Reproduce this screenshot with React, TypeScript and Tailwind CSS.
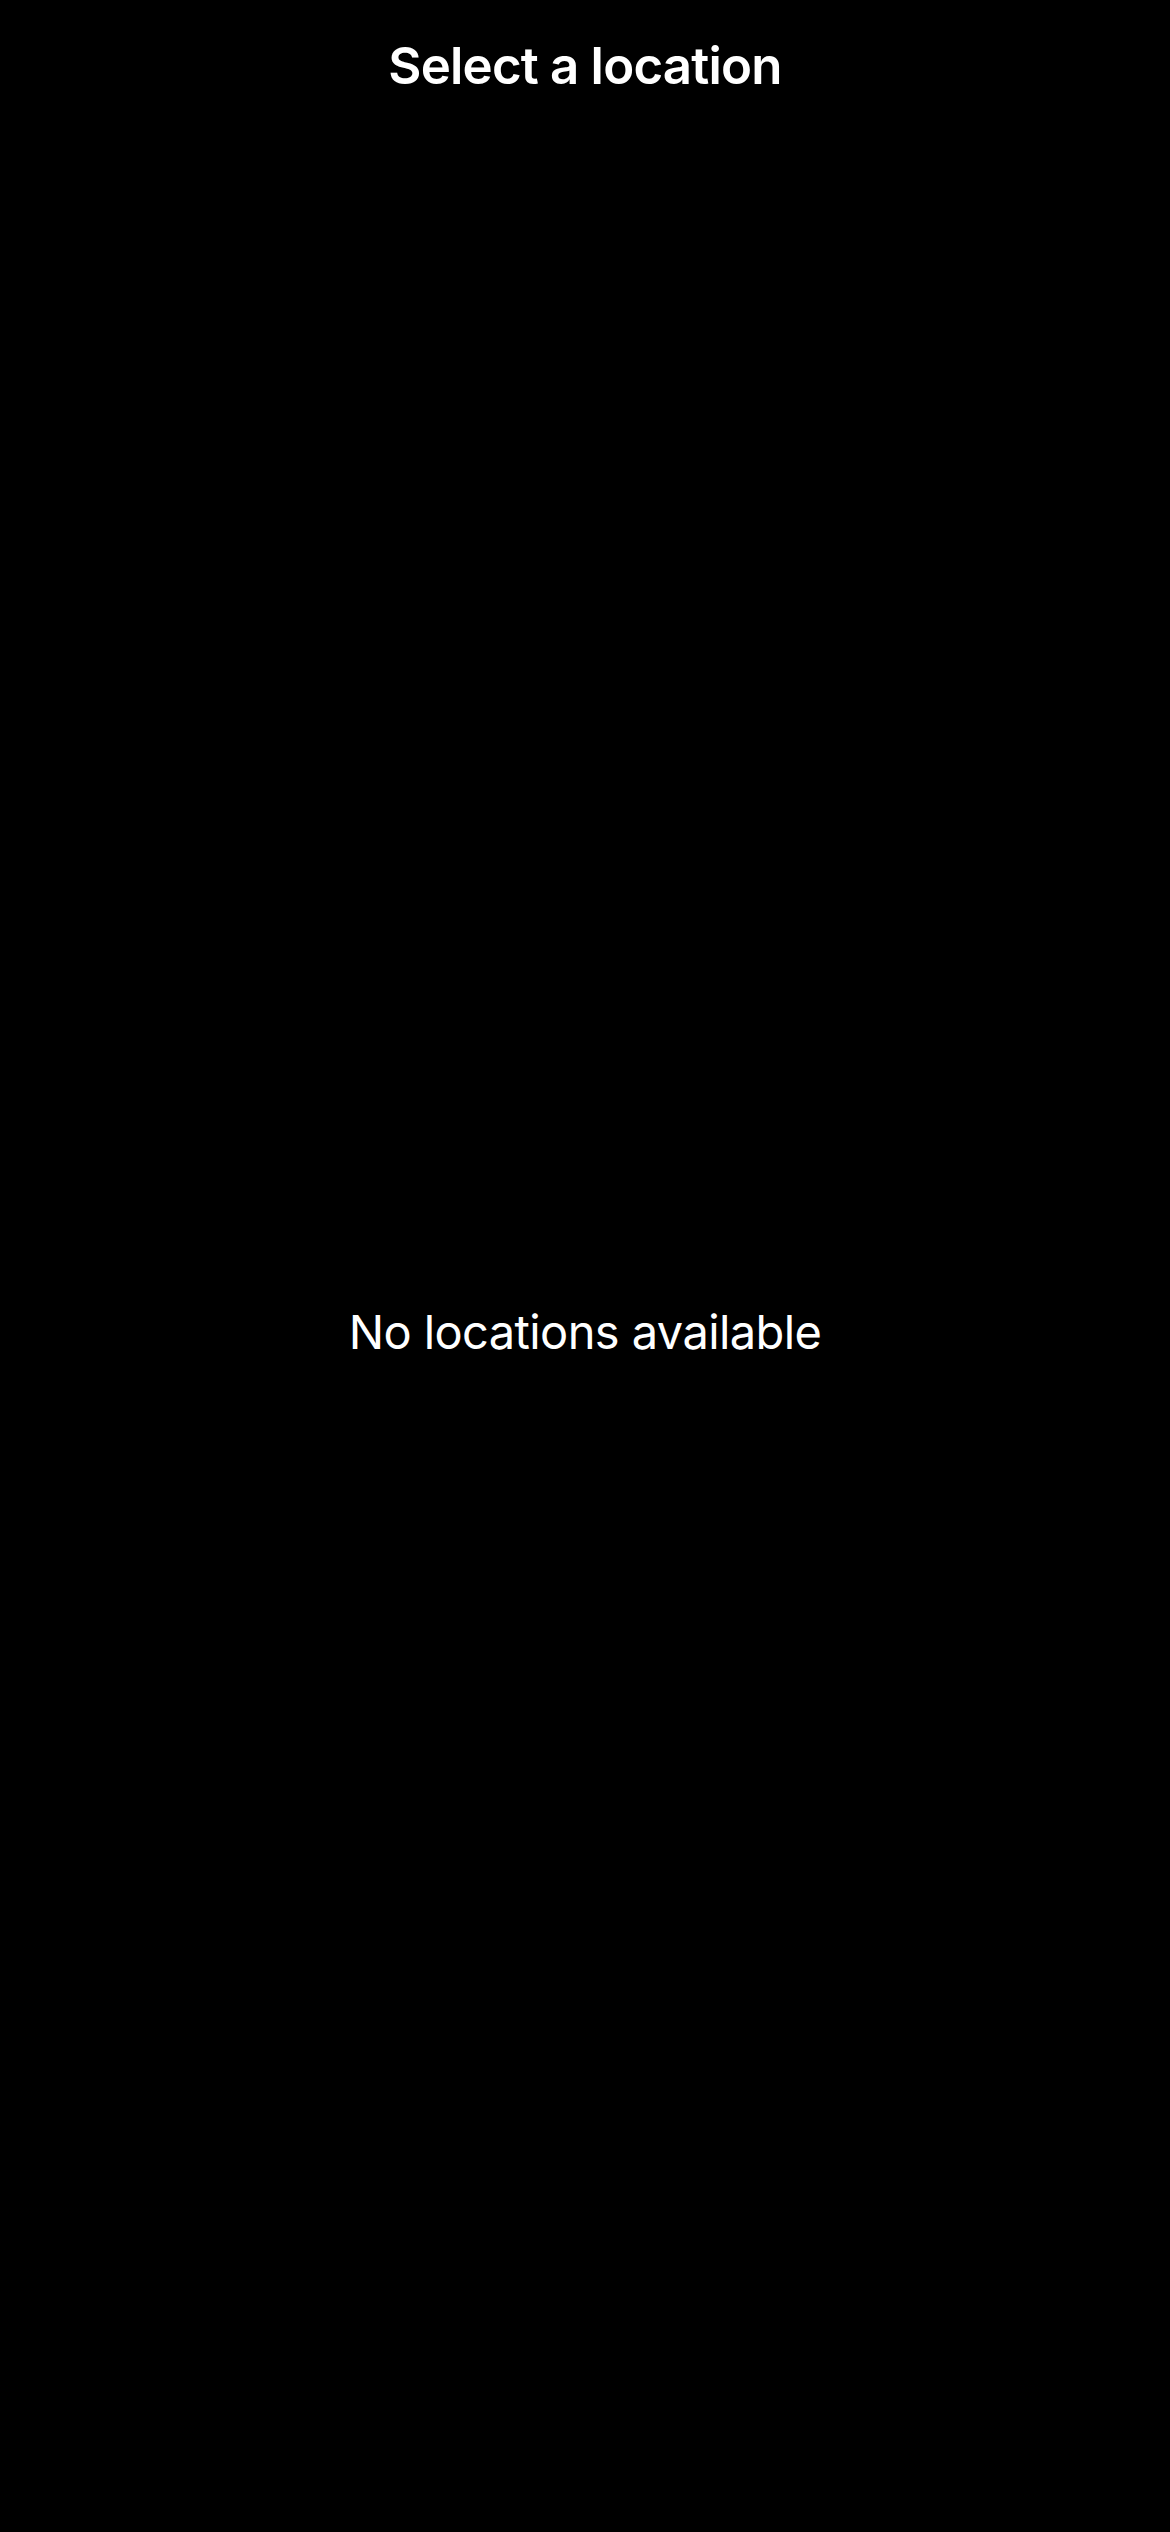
export default function App() {
  return (
    <div
      className="flex h-[2532px] w-full flex-col bg-black text-white"
      style={{ fontFamily: 'Inter, "Noto Sans", sans-serif' }}
    >
      <header className="flex h-[132px] items-start justify-center pt-[30px]">
        <h1 className="text-[51px] font-semibold leading-[72px] tracking-[-0.8px]">Select a location</h1>
      </header>
      <main className="flex flex-1 items-center justify-center">
        <p className="text-[47px] font-normal leading-[60px] tracking-[-0.6px]">No locations available</p>
      </main>
    </div>
  );
}
